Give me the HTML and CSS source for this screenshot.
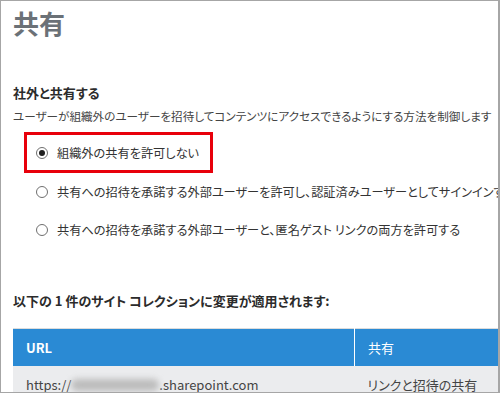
FILE: index.html
```html
<!DOCTYPE html>
<html lang="ja">
<head>
  <meta charset="UTF-8">
  <meta name="viewport" content="width=device-width, initial-scale=1.0">
  <title>共有</title>
  <link rel="stylesheet" href="styles.css">
</head>
<body>

  <div class="page">
    <h1 class="title">共有</h1>

    <h2 class="section-title">社外と共有する</h2>
    <p class="description">ユーザーが組織外のユーザーを招待してコンテンツにアクセスできるようにする方法を制御します</p>

    <div class="options">
      <div class="highlight">
        <label class="option">
          <span class="radio checked"></span>
          <span>組織外の共有を許可しない</span>
        </label>
      </div>
      <label class="option">
        <span class="radio"></span>
        <span>共有への招待を承諾する外部ユーザーを許可し、認証済みユーザーとしてサインインすることを求める</span>
      </label>
      <label class="option">
        <span class="radio"></span>
        <span>共有への招待を承諾する外部ユーザーと、匿名ゲスト リンクの両方を許可する</span>
      </label>
    </div>

    <h2 class="section-title affected">以下の 1 件のサイト コレクションに変更が適用されます:</h2>

    <table class="sites">
      <thead>
        <tr>
          <th class="col-url">URL</th>
          <th class="col-share">共有</th>
        </tr>
      </thead>
      <tbody>
        <tr>
          <td>https://<span class="blurred"></span>.sharepoint.com</td>
          <td>リンクと招待の共有</td>
        </tr>
      </tbody>
    </table>
  </div>

</body>
</html>
```

FILE: styles.css
```css
body {
  margin: 0;
  font-family: "Noto Sans CJK JP", sans-serif;
  font-feature-settings: "palt";
  background: #fff;
}
.page {
  height: 393px;
  box-sizing: border-box;
  border: 1px solid #a6a6a6;
  border-right-width: 2px;
  padding-left: 12px;
  overflow: hidden;
  white-space: nowrap;
}
.title {
  margin: 7px 0 0;
  font-size: 26px;
  line-height: 30px;
  font-weight: bold;
  color: #6b7177;
}
.section-title {
  margin: 45px 0 0;
  font-size: 13px;
  line-height: 20px;
  font-weight: bold;
  color: #2b2b2b;
}
.description {
  margin: 3px 0 0;
  font-size: 11.6px;
  line-height: 20px;
  color: #444;
}
.options {
  margin-top: 6px;
  display: flex;
  flex-direction: column;
  align-items: flex-start;
}
.highlight {
  margin-left: 11px;
  border: 3px solid #e8000b;
  width: 189px;
  height: 41px;
  box-sizing: border-box;
  display: flex;
  align-items: center;
  padding-left: 9px;
}
.option {
  display: flex;
  align-items: center;
  gap: 9px;
  height: 38px;
  font-size: 12.2px;
  color: #333;
}
.options > .option {
  padding-left: 23px;
}
.radio {
  width: 12px;
  height: 12px;
  box-sizing: border-box;
  border: 1px solid #6f6f6f;
  border-radius: 50%;
  display: flex;
  align-items: center;
  justify-content: center;
  flex-shrink: 0;
}
.radio.checked::after {
  content: "";
  width: 6px;
  height: 6px;
  border-radius: 50%;
  background: #1f1f1f;
}
.affected {
  margin-top: 42px;
}
.sites {
  margin-top: 17px;
  width: 100%;
  border-collapse: collapse;
  border-top: 1px solid #dcdcdc;
  font-size: 13px;
}
.sites th {
  background: #2a8ad4;
  color: #fff;
  text-align: left;
  height: 37px;
  padding: 0 12px 0 13px;
}
.sites .col-url {
  width: 316px;
  font-weight: bold;
  border-right: 1px solid #fff;
}
.sites .col-share {
  font-weight: normal;
}
.sites td {
  background: #ebecee;
  color: #444;
  padding: 9px 12px 0 13px;
  line-height: 20px;
  vertical-align: top;
  height: 40px;
}
.blurred {
  display: inline-block;
  width: 88px;
  height: 12px;
  vertical-align: -1px;
  background: #bcbcbc;
  border-radius: 6px;
  filter: blur(3px);
}
```
